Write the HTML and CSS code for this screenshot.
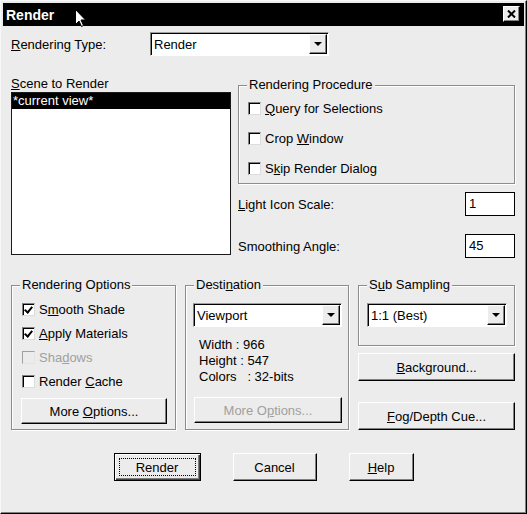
FILE: index.html
```html
<!DOCTYPE html>
<html lang="en">
<head>
    <meta charset="UTF-8" />
    <title>Render</title>
    <link rel="stylesheet" href="styles.css">
</head>
<body>
<div class="dialog">
    <div class="titlebar">
        <span class="title">Render</span>
        <svg class="cursor" width="12" height="19" viewBox="0 0 12 19">
            <path d="M0.5 0.5 L0.5 15.5 L4 12 L6.5 17.5 L8.5 16.5 L6 11 L10.5 11 Z" fill="#fff" stroke="#000" stroke-width="1"/>
        </svg>
        <button class="close-btn" type="button">
            <svg width="9" height="8" viewBox="0 0 9 8">
                <path d="M1 0.5 L8 7.5 M8 0.5 L1 7.5" stroke="#000" stroke-width="2"/>
            </svg>
        </button>
    </div>

    <div class="content">
        <div class="type-row">
            <label class="type-label"><u>R</u>endering Type:</label>
            <div class="combo type-combo">
                <span class="combo-value">Render</span>
                <span class="combo-arrow"></span>
            </div>
        </div>

        <div class="main">
            <div class="scene-col">
                <div class="scene-label"><u>S</u>cene to Render</div>
                <div class="listbox">
                    <div class="list-item selected">*current view*</div>
                </div>
            </div>

            <div class="side-col">
                <div class="group procedure">
                    <div class="group-title">Rendering Procedure</div>
                    <div class="check-row"><span class="check"></span><span><u>Q</u>uery for Selections</span></div>
                    <div class="check-row"><span class="check"></span><span>Crop <u>W</u>indow</span></div>
                    <div class="check-row"><span class="check"></span><span>S<u>k</u>ip Render Dialog</span></div>
                </div>

                <div class="field-row first">
                    <span><u>L</u>ight Icon Scale:</span>
                    <div class="textbox">1</div>
                </div>
                <div class="field-row">
                    <span>Smoothin<u>g</u> Angle:</span>
                    <div class="textbox">45</div>
                </div>
            </div>
        </div>

        <div class="groups">
            <div class="group options">
                <div class="group-title">Rendering Options</div>
                <div class="opt-row"><span class="check checked"></span><span>S<u>m</u>ooth Shade</span></div>
                <div class="opt-row"><span class="check checked"></span><span><u>A</u>pply Materials</span></div>
                <div class="opt-row disabled"><span class="check"></span><span>Sha<u>d</u>ows</span></div>
                <div class="opt-row"><span class="check"></span><span>Render <u>C</u>ache</span></div>
                <button class="btn group-btn" type="button">More <u>O</u>ptions...</button>
            </div>

            <div class="group destination">
                <div class="group-title">Desti<u>n</u>ation</div>
                <div class="combo dest-combo">
                    <span class="combo-value">Viewport</span>
                    <span class="combo-arrow"></span>
                </div>
                <div class="info">
                    <div class="info-line">Width : 966</div>
                    <div class="info-line">Height : 547</div>
                    <div class="info-line">Colors   : 32-bits</div>
                </div>
                <button class="btn group-btn disabled" type="button">More O<u>p</u>tions...</button>
            </div>

            <div class="right-col">
                <div class="group sampling">
                    <div class="group-title">S<u>u</u>b Sampling</div>
                    <div class="combo sample-combo">
                        <span class="combo-value">1:1 (Best)</span>
                        <span class="combo-arrow"></span>
                    </div>
                </div>
                <button class="btn side-btn" type="button"><u>B</u>ackground...</button>
                <button class="btn side-btn fog" type="button"><u>F</u>og/Depth Cue...</button>
            </div>
        </div>

        <div class="actions">
            <button class="btn default render-btn" type="button"><span class="focus">Render</span></button>
            <button class="btn cancel-btn" type="button">Cancel</button>
            <button class="btn help-btn" type="button"><u>H</u>elp</button>
        </div>
    </div>
</div>
</body>
</html>
```

FILE: styles.css
```css
body {
    margin: 0;
    padding: 0;
    font-family: 'Liberation Sans', Arial, sans-serif;
    font-size: 13px;
    color: #000;
    background-color: #ececec;
}

u {
    text-decoration: underline;
    text-underline-offset: 1px;
}

.dialog {
    width: 527px;
    height: 514px;
    box-sizing: border-box;
    background-color: #ececec;
    border: 1px solid;
    border-color: #f8f8f8 #000 #000 #f8f8f8;
    box-shadow: inset -1px -1px 0 #808080;
    padding: 2px;
}

.titlebar {
    position: relative;
    height: 23px;
    background-color: #000;
    display: flex;
    align-items: center;
    justify-content: space-between;
    padding: 0 4px 0 3px;
}

.title {
    color: #fff;
    font-weight: bold;
    font-size: 14px;
}

.cursor {
    position: absolute;
    left: 72px;
    top: 6px;
}

.close-btn {
    width: 17px;
    height: 16px;
    padding: 0;
    margin-top: -1px;
    background-color: #ececec;
    border: 1px solid;
    border-color: #fff #000 #000 #fff;
    box-shadow: inset -1px -1px 0 #808080;
    display: flex;
    align-items: center;
    justify-content: center;
}

.content {
    padding: 6px 9px 0 8px;
}

/* top row */
.type-row {
    display: flex;
    align-items: center;
    height: 24px;
}

.type-label {
    width: 139px;
}

.combo {
    box-sizing: border-box;
    height: 24px;
    background-color: #fff;
    border: 1px solid;
    border-color: #a0a0a0 #fff #fff #808080;
    box-shadow: inset 1px 1px 0 #000;
    display: flex;
    align-items: center;
    justify-content: space-between;
    padding: 1px 1px 1px 3px;
}

.type-combo {
    width: 179px;
}

.combo-arrow {
    box-sizing: border-box;
    width: 18px;
    height: 20px;
    background-color: #ececec;
    border: 1px solid;
    border-color: #fff #000 #000 #fff;
    box-shadow: inset -1px -1px 0 #808080;
    position: relative;
}

.combo-arrow::after {
    content: "";
    position: absolute;
    left: 4px;
    top: 7px;
    border-left: 4px solid transparent;
    border-right: 4px solid transparent;
    border-top: 4px solid #000;
}

/* scene list and procedure */
.main {
    display: flex;
    gap: 7px;
    margin-top: 20px;
}

.scene-col {
    width: 220px;
}

.scene-label {
    line-height: 16px;
}

.listbox {
    box-sizing: border-box;
    height: 163px;
    background-color: #fff;
    border: 1px solid #1a1a1a;
}

.list-item {
    height: 16px;
    line-height: 16px;
    padding-left: 1px;
}

.selected {
    background-color: #000;
    color: #fff;
}

.side-col {
    width: 277px;
    padding-top: 9px;
}

.group {
    position: relative;
    box-sizing: border-box;
    border: 1px solid #8c8c8c;
    box-shadow: 1px 1px 0 #fff, inset 1px 1px 0 #fff;
}

.group-title {
    position: absolute;
    top: -9px;
    left: 8px;
    line-height: 16px;
    padding: 0 2px;
    background-color: #ececec;
}

.procedure {
    height: 99px;
    padding: 7px 0 0 9px;
}

.check-row {
    display: flex;
    align-items: center;
    gap: 4px;
    height: 30px;
}

.check {
    box-sizing: border-box;
    width: 13px;
    height: 13px;
    background-color: #fff;
    border: 1px solid;
    border-color: #808080 #dcdcdc #dcdcdc #808080;
    box-shadow: inset 1px 1px 0 #000;
    position: relative;
}

.check.checked::after {
    content: "";
    position: absolute;
    left: 3px;
    top: 1px;
    width: 3px;
    height: 6px;
    border: solid #000;
    border-width: 0 2px 2px 0;
    transform: rotate(40deg);
}

.field-row {
    display: flex;
    align-items: center;
    justify-content: space-between;
    height: 24px;
    margin-top: 18px;
}

.field-row.first {
    margin-top: 8px;
}

.textbox {
    box-sizing: border-box;
    width: 50px;
    height: 24px;
    background-color: #fff;
    border: 1px solid #000;
    padding: 3px 0 0 3px;
}

/* lower groups */
.groups {
    display: grid;
    grid-template-columns: 165px 164px 157px;
    column-gap: 9px;
    margin-top: 27px;
}

.options,
.destination {
    height: 145px;
}

.options {
    padding: 11px 8px 0 9px;
}

.opt-row {
    display: flex;
    align-items: center;
    gap: 4px;
    height: 24px;
    margin-left: 1px;
}

.opt-row.disabled {
    color: #a0a0a0;
}

.opt-row.disabled .check {
    background-color: #ececec;
    border-color: #a0a0a0 #e4e4e4 #e4e4e4 #a0a0a0;
    box-shadow: none;
}

.btn {
    box-sizing: border-box;
    font-family: inherit;
    font-size: 13px;
    color: #000;
    background-color: #ececec;
    border: 1px solid;
    border-color: #fff #000 #000 #fff;
    box-shadow: inset -1px -1px 0 #808080;
    padding: 0;
}

.btn.disabled {
    color: #a0a0a0;
}

.group-btn {
    display: block;
    width: 100%;
    height: 26px;
    margin-top: 5px;
}

.destination {
    padding: 17px 6px 0 7px;
}

.dest-combo {
    width: 149px;
}

.info {
    margin-top: 10px;
    padding-left: 6px;
    line-height: 16px;
}

.info-line {
    white-space: pre;
}

.destination .group-btn {
    width: 148px;
    margin: 12px 0 0 1px;
}

.right-col {
    display: flex;
    flex-direction: column;
}

.sampling {
    height: 61px;
    padding: 17px 7px 0 8px;
}

.sample-combo {
    width: 140px;
}

.side-btn {
    height: 28px;
    margin-top: 7px;
}

.side-btn.fog {
    margin-top: 21px;
}

/* dialog buttons */
.actions {
    display: flex;
    justify-content: center;
    gap: 32px;
    margin-top: 23px;
    padding-left: 1px;
}

.actions .btn {
    height: 28px;
}

.render-btn {
    width: 87px;
    border: 1px solid #000;
    box-shadow: inset 1px 1px 0 #fff, inset -1px -1px 0 #404040, inset -2px -2px 0 #808080;
    padding: 4px;
}

.focus {
    display: flex;
    align-items: center;
    justify-content: center;
    height: 100%;
    border: 1px dotted #000;
    box-sizing: border-box;
}

.cancel-btn {
    width: 84px;
}

.help-btn {
    width: 65px;
}
```
